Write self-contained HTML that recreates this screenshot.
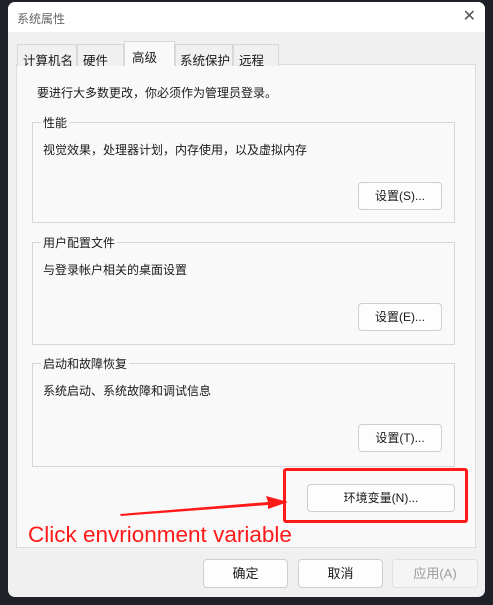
<!DOCTYPE html>
<html><head><meta charset="utf-8"><style>
body{margin:0;width:493px;height:605px;background:#1f2128;position:relative;overflow:hidden;font-family:"Liberation Sans","Noto Sans CJK SC",sans-serif;font-size:12px;color:#1a1a1a}
.win{position:absolute;left:8px;top:2px;width:477px;height:595px;background:#f0f0f0;border-radius:7px;overflow:hidden}
.title{position:absolute;left:0;top:0;right:0;height:30px;background:#fff;color:#666;font-size:12px}
.title span{position:absolute;left:9px;top:8px}
.x{position:absolute;right:9px;top:4px;font-size:16px;color:#555}
.tab{position:absolute;top:42px;height:22px;background:#f0f0f0;border:1px solid #d8d8d8;border-bottom:none;box-sizing:border-box;font-size:12.5px;padding:5px 0 0 5px;white-space:nowrap;overflow:hidden}
.panel{position:absolute;left:8px;top:62px;width:460px;height:484px;background:#f9f9f9;border:1px solid #dcdcdc;box-sizing:border-box}
.grp{position:absolute;left:24px;width:423px;border:1px solid #d6d6d6;box-sizing:border-box}
.lg{position:absolute;left:8px;top:-9px;background:#f9f9f9;padding:0 2px;font-size:12px}
.t{position:absolute;font-size:12px;white-space:nowrap}
.btn{position:absolute;background:#fdfdfd;border:1px solid #cfcfcf;border-radius:4px;box-sizing:border-box;text-align:center;font-size:12px}
</style></head><body>
<div class="win">
<div class="title"><span>系统属性</span><div class="x">✕</div></div>
<div class="panel"></div>
<div class="tab" style="left:9px;width:60px">计算机名</div>
<div class="tab" style="left:69px;width:47px">硬件</div>
<div class="tab" style="left:116px;width:51px;top:39px;height:25px;background:#f9f9f9;padding:5px 0 0 7px;z-index:2">高级</div>
<div class="tab" style="left:167px;width:58px;padding-left:4px">系统保护</div>
<div class="tab" style="left:225px;width:46px">远程</div>
<div class="t" style="left:29px;top:82px">要进行大多数更改，你必须作为管理员登录。</div>
<div class="grp" style="top:120px;height:101px"><div class="lg">性能</div><div class="t" style="left:10px;top:18px">视觉效果，处理器计划，内存使用，以及虚拟内存</div></div>
<div class="grp" style="top:240px;height:103px"><div class="lg">用户配置文件</div><div class="t" style="left:10px;top:18px">与登录帐户相关的桌面设置</div></div>
<div class="grp" style="top:361px;height:104px"><div class="lg">启动和故障恢复</div><div class="t" style="left:10px;top:18px">系统启动、系统故障和调试信息</div></div>
<div class="btn" style="left:350px;top:180px;width:84px;height:28px;line-height:26px">设置(S)...</div>
<div class="btn" style="left:350px;top:301px;width:84px;height:28px;line-height:26px">设置(E)...</div>
<div class="btn" style="left:350px;top:422px;width:84px;height:28px;line-height:26px">设置(T)...</div>
<div class="btn" style="left:299px;top:482px;width:148px;height:28px;line-height:26px">环境变量(N)...</div>
<div style="position:absolute;left:275px;top:466px;width:185px;height:55px;border:3px solid #ff1a1a;border-radius:3px;box-sizing:border-box"></div>
<svg style="position:absolute;left:110px;top:490px" width="170" height="30"><polygon points="2,22 150,10 148,4 170,10 150,17 150,13 3,24" fill="#ff1a1a"/></svg>
<div style="position:absolute;left:20px;top:520px;color:#ff1a1a;font-size:22.5px;white-space:nowrap">Click envrionment variable</div>
<div class="btn" style="left:195px;top:557px;width:85px;height:29px;line-height:27px;font-size:13px">确定</div>
<div class="btn" style="left:290px;top:557px;width:85px;height:29px;line-height:27px;font-size:13px">取消</div>
<div class="btn" style="left:384px;top:557px;width:86px;height:29px;line-height:27px;font-size:13px;color:#9a9a9a;background:#f5f5f5;border-color:#e0e0e0">应用(A)</div>
</div>
</body></html>
